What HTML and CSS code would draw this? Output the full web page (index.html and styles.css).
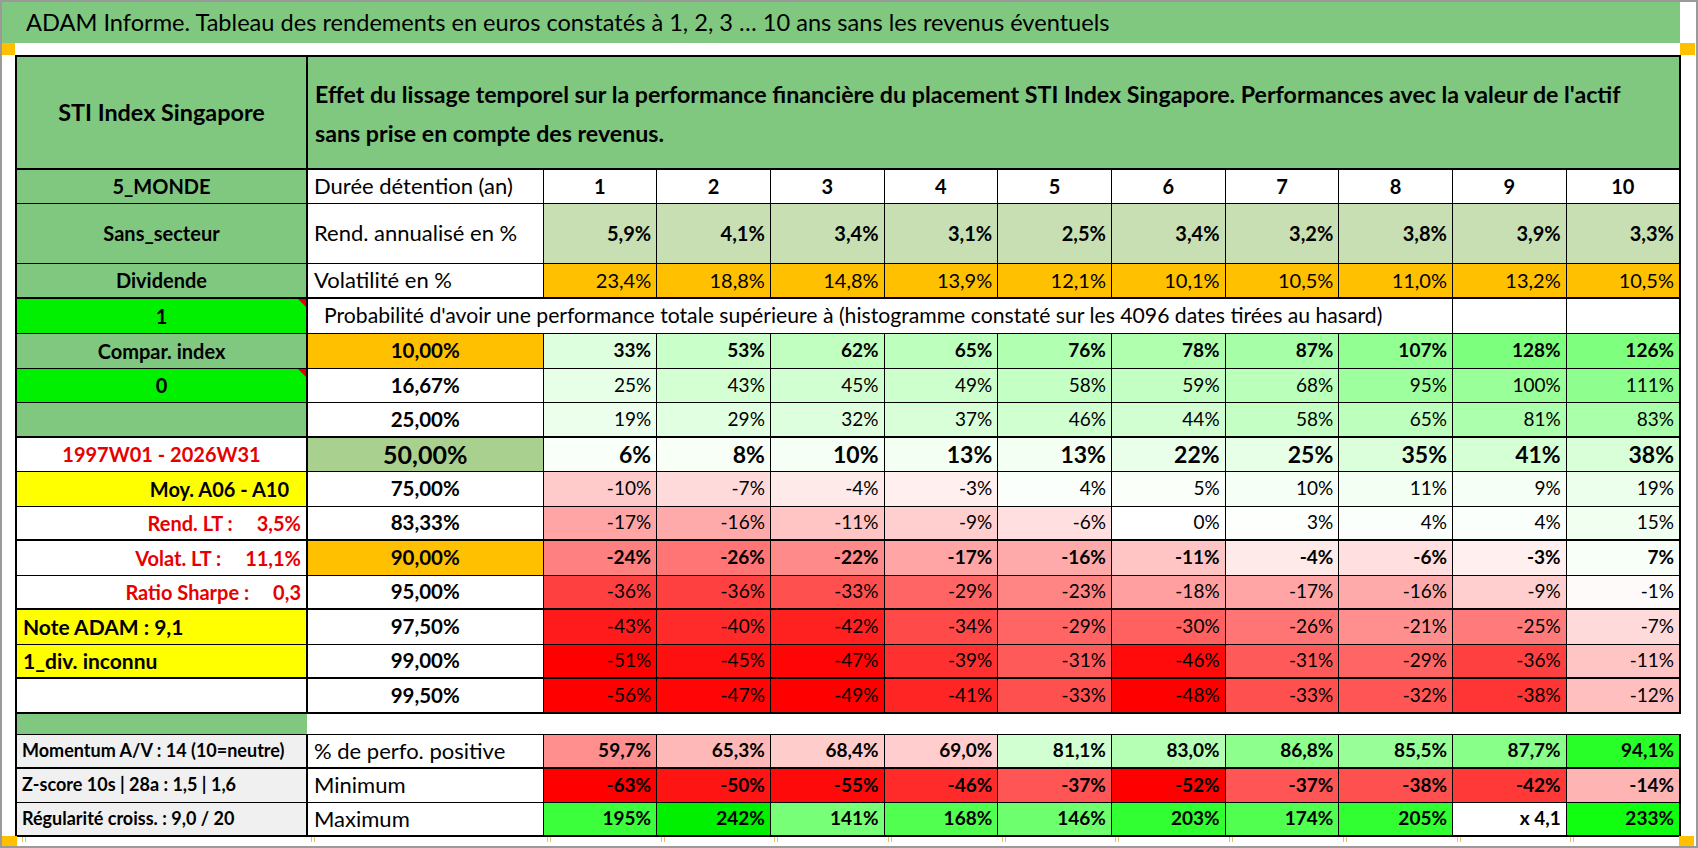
FILE: index.html
```html
<!DOCTYPE html>
<html lang="fr">
<head>
<meta charset="utf-8">
<title>ADAM Informe – STI Index Singapore</title>
<link rel="stylesheet" href="styles.css">
</head>
<body>
<div class="page">
  <div class="title-row">
    <div class="title">ADAM Informe. Tableau des rendements en euros constatés à 1, 2, 3 … 10 ans sans les revenus éventuels</div>
  </div>
  <div class="marks-row"><span class="mark mark-l"></span><span class="mark mark-r"></span></div>
  <div class="main">
    <table class="sheet">
      <colgroup>
        <col class="col-a"><col class="col-b">
        <col class="col-n"><col class="col-n"><col class="col-n"><col class="col-n"><col class="col-n">
        <col class="col-n"><col class="col-n"><col class="col-n"><col class="col-n"><col class="col-n">
      </colgroup>
      <tr class="r-head tb">
        <td class="c1 green hd sti center">STI Index Singapore</td>
        <td class="green hd intro" colspan="11"><span class="line">Effet du lissage temporel sur la performance financière du placement STI Index Singapore. Performances avec la valeur de l'actif</span><br><span class="line">sans prise en compte des revenus.</span></td>
      </tr>
      <tr class="r-duree">
        <td class="c1 green b center">5_MONDE</td>
        <td class="lbl">Durée détention (an)</td>
        <td class="b center">1</td><td class="b center">2</td><td class="b center">3</td><td class="b center">4</td><td class="b center">5</td>
        <td class="b center">6</td><td class="b center">7</td><td class="b center">8</td><td class="b center">9</td><td class="b center">10</td>
      </tr>
      <tr class="r-rend">
        <td class="c1 green b center">Sans_secteur</td>
        <td class="lbl">Rend. annualisé en %</td>
        <td class="sage num b">5,9%</td><td class="sage num b">4,1%</td><td class="sage num b">3,4%</td><td class="sage num b">3,1%</td><td class="sage num b">2,5%</td>
        <td class="sage num b">3,4%</td><td class="sage num b">3,2%</td><td class="sage num b">3,8%</td><td class="sage num b">3,9%</td><td class="sage num b">3,3%</td>
      </tr>
      <tr class="r-vol tb">
        <td class="c1 green b center">Dividende</td>
        <td class="lbl">Volatilité en %</td>
        <td class="orange num">23,4%</td><td class="orange num">18,8%</td><td class="orange num">14,8%</td><td class="orange num">13,9%</td><td class="orange num">12,1%</td>
        <td class="orange num">10,1%</td><td class="orange num">10,5%</td><td class="orange num">11,0%</td><td class="orange num">13,2%</td><td class="orange num">10,5%</td>
      </tr>
      <tr class="r-prob">
        <td class="c1 lime b center flag">1</td>
        <td class="prob" colspan="9">Probabilité d'avoir une performance totale supérieure à (histogramme constaté sur les 4096 dates tirées au hasard)</td>
        <td></td><td></td>
      </tr>
      <tr class="r-odd">
        <td class="c1 green b center">Compar. index</td>
        <td class="orange pct">10,00%</td>
        <td class="num b" style="background:#ddffdd">33%</td><td class="num b" style="background:#c9ffc9">53%</td><td class="num b" style="background:#c0ffc0">62%</td><td class="num b" style="background:#bdffbd">65%</td><td class="num b" style="background:#b1ffb1">76%</td>
        <td class="num b" style="background:#afffaf">78%</td><td class="num b" style="background:#a6ffa6">87%</td><td class="num b" style="background:#92ff92">107%</td><td class="num b" style="background:#7cff7c">128%</td><td class="num b" style="background:#7eff7e">126%</td>
      </tr>
      <tr class="r-even">
        <td class="c1 lime b center flag">0</td>
        <td class="pct">16,67%</td>
        <td class="num" style="background:#e6ffe6">25%</td><td class="num" style="background:#d3ffd3">43%</td><td class="num" style="background:#d1ffd1">45%</td><td class="num" style="background:#cdffcd">49%</td><td class="num" style="background:#c4ffc4">58%</td>
        <td class="num" style="background:#c3ffc3">59%</td><td class="num" style="background:#baffba">68%</td><td class="num" style="background:#9eff9e">95%</td><td class="num" style="background:#99ff99">100%</td><td class="num" style="background:#8eff8e">111%</td>
      </tr>
      <tr class="r-odd tb">
        <td class="c1 green"></td>
        <td class="pct">25,00%</td>
        <td class="num" style="background:#ecffec">19%</td><td class="num" style="background:#e1ffe1">29%</td><td class="num" style="background:#deffde">32%</td><td class="num" style="background:#d9ffd9">37%</td><td class="num" style="background:#d0ffd0">46%</td>
        <td class="num" style="background:#d2ffd2">44%</td><td class="num" style="background:#c4ffc4">58%</td><td class="num" style="background:#bdffbd">65%</td><td class="num" style="background:#acffac">81%</td><td class="num" style="background:#aaffaa">83%</td>
      </tr>
      <tr class="r-even">
        <td class="c1 red-text b center">1997W01 - 2026W31</td>
        <td class="sage2 pct big">50,00%</td>
        <td class="num b big" style="background:#f9fff9">6%</td><td class="num b big" style="background:#f7fff7">8%</td><td class="num b big" style="background:#f5fff5">10%</td><td class="num b big" style="background:#f2fff2">13%</td><td class="num b big" style="background:#f2fff2">13%</td>
        <td class="num b big" style="background:#e9ffe9">22%</td><td class="num b big" style="background:#e6ffe6">25%</td><td class="num b big" style="background:#dbffdb">35%</td><td class="num b big" style="background:#d5ffd5">41%</td><td class="num b big" style="background:#d8ffd8">38%</td>
      </tr>
      <tr class="r-odd">
        <td class="c1 yellow b right moy">Moy. A06 - A10</td>
        <td class="pct">75,00%</td>
        <td class="num" style="background:#ffcaca">-10%</td><td class="num" style="background:#ffdada">-7%</td><td class="num" style="background:#ffeaea">-4%</td><td class="num" style="background:#ffefef">-3%</td><td class="num" style="background:#fbfffb">4%</td>
        <td class="num" style="background:#fafffa">5%</td><td class="num" style="background:#f5fff5">10%</td><td class="num" style="background:#f4fff4">11%</td><td class="num" style="background:#f6fff6">9%</td><td class="num" style="background:#ecffec">19%</td>
      </tr>
      <tr class="r-even tb">
        <td class="c1 red-text b right lt">Rend. LT :<span class="lt-val">3,5%</span></td>
        <td class="pct">83,33%</td>
        <td class="num" style="background:#ffa5a5">-17%</td><td class="num" style="background:#ffaaaa">-16%</td><td class="num" style="background:#ffc5c5">-11%</td><td class="num" style="background:#ffcfcf">-9%</td><td class="num" style="background:#ffdfdf">-6%</td>
        <td class="num" style="background:#ffffff">0%</td><td class="num" style="background:#fcfffc">3%</td><td class="num" style="background:#fbfffb">4%</td><td class="num" style="background:#fbfffb">4%</td><td class="num" style="background:#f0fff0">15%</td>
      </tr>
      <tr class="r-odd">
        <td class="c1 red-text b right lt">Volat. LT :<span class="lt-val">11,1%</span></td>
        <td class="orange pct">90,00%</td>
        <td class="num b" style="background:#ff8080">-24%</td><td class="num b" style="background:#ff7575">-26%</td><td class="num b" style="background:#ff8a8a">-22%</td><td class="num b" style="background:#ffa5a5">-17%</td><td class="num b" style="background:#ffaaaa">-16%</td>
        <td class="num b" style="background:#ffc5c5">-11%</td><td class="num b" style="background:#ffeaea">-4%</td><td class="num b" style="background:#ffdfdf">-6%</td><td class="num b" style="background:#ffefef">-3%</td><td class="num b" style="background:#f8fff8">7%</td>
      </tr>
      <tr class="r-even tb">
        <td class="c1 red-text b right lt">Ratio Sharpe :<span class="lt-val">0,3</span></td>
        <td class="pct">95,00%</td>
        <td class="num" style="background:#ff4040">-36%</td><td class="num" style="background:#ff4040">-36%</td><td class="num" style="background:#ff5050">-33%</td><td class="num" style="background:#ff6565">-29%</td><td class="num" style="background:#ff8585">-23%</td>
        <td class="num" style="background:#ff9f9f">-18%</td><td class="num" style="background:#ffa5a5">-17%</td><td class="num" style="background:#ffaaaa">-16%</td><td class="num" style="background:#ffcfcf">-9%</td><td class="num" style="background:#fffafa">-1%</td>
      </tr>
      <tr class="r-odd">
        <td class="c1 yellow b left-pad">Note ADAM : 9,1</td>
        <td class="pct">97,50%</td>
        <td class="num" style="background:#ff1b1b">-43%</td><td class="num" style="background:#ff2b2b">-40%</td><td class="num" style="background:#ff2020">-42%</td><td class="num" style="background:#ff4a4a">-34%</td><td class="num" style="background:#ff6565">-29%</td>
        <td class="num" style="background:#ff6060">-30%</td><td class="num" style="background:#ff7575">-26%</td><td class="num" style="background:#ff8f8f">-21%</td><td class="num" style="background:#ff7a7a">-25%</td><td class="num" style="background:#ffdada">-7%</td>
      </tr>
      <tr class="r-even tb">
        <td class="c1 yellow b left-pad">1_div. inconnu</td>
        <td class="pct">99,00%</td>
        <td class="num" style="background:#ff0000">-51%</td><td class="num" style="background:#ff1010">-45%</td><td class="num" style="background:#ff0505">-47%</td><td class="num" style="background:#ff3030">-39%</td><td class="num" style="background:#ff5a5a">-31%</td>
        <td class="num" style="background:#ff0b0b">-46%</td><td class="num" style="background:#ff5a5a">-31%</td><td class="num" style="background:#ff6565">-29%</td><td class="num" style="background:#ff4040">-36%</td><td class="num" style="background:#ffc5c5">-11%</td>
      </tr>
      <tr class="r-odd tb">
        <td class="c1"></td>
        <td class="pct">99,50%</td>
        <td class="num" style="background:#ff0000">-56%</td><td class="num" style="background:#ff0505">-47%</td><td class="num" style="background:#ff0000">-49%</td><td class="num" style="background:#ff2525">-41%</td><td class="num" style="background:#ff5050">-33%</td>
        <td class="num" style="background:#ff0000">-48%</td><td class="num" style="background:#ff5050">-33%</td><td class="num" style="background:#ff5555">-32%</td><td class="num" style="background:#ff3535">-38%</td><td class="num" style="background:#ffbfbf">-12%</td>
      </tr>
      <tr class="r-gap">
        <td class="c1 green gap-c1"></td>
        <td class="blank" colspan="11"></td>
      </tr>
      <tr class="r-even tb">
        <td class="c1 grey stat">Momentum A/V : 14 (10=neutre)</td>
        <td class="lbl">% de perfo. positive</td>
        <td class="num b" style="background:#ff8e8e">59,7%</td><td class="num b" style="background:#ffb8b8">65,3%</td><td class="num b" style="background:#ffcccc">68,4%</td><td class="num b" style="background:#ffcdcd">69,0%</td><td class="num b" style="background:#d2ffd2">81,1%</td>
        <td class="num b" style="background:#b4ffb4">83,0%</td><td class="num b" style="background:#8cff8c">86,8%</td><td class="num b" style="background:#98ff98">85,5%</td><td class="num b" style="background:#88ff88">87,7%</td><td class="num b" style="background:#28ff28">94,1%</td>
      </tr>
      <tr class="r-odd2">
        <td class="c1 grey stat">Z-score 10s | 28a : 1,5 | 1,6</td>
        <td class="lbl">Minimum</td>
        <td class="num b" style="background:#ff0000">-63%</td><td class="num b" style="background:#ff1414">-50%</td><td class="num b" style="background:#ff0a0a">-55%</td><td class="num b" style="background:#ff2a2a">-46%</td><td class="num b" style="background:#ff5555">-37%</td>
        <td class="num b" style="background:#ff0000">-52%</td><td class="num b" style="background:#ff5555">-37%</td><td class="num b" style="background:#ff5050">-38%</td><td class="num b" style="background:#ff3838">-42%</td><td class="num b" style="background:#ffb4b4">-14%</td>
      </tr>
      <tr class="r-odd2">
        <td class="c1 grey stat">Régularité croiss. : 9,0 / 20</td>
        <td class="lbl">Maximum</td>
        <td class="num b" style="background:#3cff3c">195%</td><td class="num b" style="background:#00f000">242%</td><td class="num b" style="background:#78ff78">141%</td><td class="num b" style="background:#50ff50">168%</td><td class="num b" style="background:#6eff6e">146%</td>
        <td class="num b" style="background:#32ff32">203%</td><td class="num b" style="background:#50ff50">174%</td><td class="num b" style="background:#32ff32">205%</td><td class="num b" style="background:#ffffff">x 4,1</td><td class="num b" style="background:#10ff10">233%</td>
      </tr>
    </table>
  </div>
  <div class="foot">
    <span class="fmark fmark-l"></span>
    <div class="ticks">
      <span class="tick"></span><span class="tick"></span><span class="tick"></span><span class="tick"></span>
      <span class="tick"></span><span class="tick"></span><span class="tick"></span><span class="tick"></span>
      <span class="tick"></span><span class="tick"></span><span class="tick"></span><span class="tick"></span>
    </div>
    <span class="fmark fmark-r"></span>
  </div>
</div>
</body>
</html>
```
FILE: styles.css
```css
* { box-sizing: border-box; }
html, body { margin: 0; padding: 0; background: #ffffff; }
body {
  font-family: "Lato", "Liberation Sans", sans-serif;
  color: #000000;
}

.page {
  width: 1698px;
  height: 848px;
  border: 2px solid #9a9a9a;
  display: flex;
  flex-direction: column;
  overflow: hidden;
  background: #ffffff;
}

/* title */
.title-row { flex: none; height: 41px; display: flex; }
.title {
  width: 1678px;
  background: #80c880;
  font-size: 23.6px;
  line-height: 41px;
  padding-left: 24px;
  white-space: nowrap;
}

/* selection handles */
.marks-row { flex: none; height: 12px; display: flex; }
.mark { display: block; height: 12px; background: #ffc000; }
.mark-l { width: 13px; }
.mark-r { width: 15px; margin-left: 1665px; }

.main { flex: none; height: 781px; padding-left: 13px; }

/* sheet */
.sheet {
  width: 1664px;
  border-collapse: collapse;
  table-layout: fixed;
  border: 2px solid #000;
}
.col-a { width: 291px; }
.col-b { width: 236px; }
.col-n { width: 113.7px; }

.sheet td {
  border: 1px solid #000;
  padding: 0 5px;
  white-space: nowrap;
  overflow: hidden;
  vertical-align: middle;
  font-size: 19px;
  line-height: 1.1;
}
.sheet td.c1 { border-right: 2px solid #000; }
.sheet tr.tb td { border-bottom: 2px solid #000; }

.r-head { height: 113px; }
.r-duree { height: 34px; }
.r-rend { height: 60px; }
.r-vol { height: 35px; }
.r-prob { height: 35px; }
.r-odd { height: 35px; }
.r-even { height: 34px; }
.r-odd2 { height: 34px; }
.r-gap { height: 21px; }

.sheet td.hd { font-weight: 700; }
.sheet td.intro {
  font-size: 23.2px;
  line-height: 39px;
  padding-left: 7px;
  padding-top: 2px;
}
.intro .line { white-space: nowrap; }

.b { font-weight: 700; }
.center { text-align: center; }
.right { text-align: right; }
.num { text-align: right; }
.sheet td.b.center, .sheet td.c1 { font-size: 20px; }
.sheet td.c1.sti { font-size: 23.4px; }
.sheet td.pct { text-align: center; font-weight: 700; font-size: 20.5px; }
.sheet td.num.big { font-size: 23px; }
.sheet td.pct.big { font-size: 25px; }
.sheet td.lbl { font-size: 22px; padding-left: 6px; }
.sheet td.prob { font-size: 21.2px; padding-left: 16px; }
.sheet td.sage, .sheet td.orange.num { font-size: 20px; }

/* fills */
.green { background: #80c880; }
.lime { background: #00f000; }
.yellow { background: #ffff00; }
.orange { background: #ffc000; }
.sage { background: #c8dfb4; }
.sage2 { background: #a9d08e; }
.grey { background: #f0f0f0; }

.red-text { color: #e60000; }
.sheet td.moy { padding-right: 17px; }
.sheet td.lt { padding-right: 5px; }
.lt-val { margin-left: 24px; }
.sheet td.left-pad { padding-left: 6px; font-size: 21px; }
.sheet td.stat { font-size: 18px; font-weight: 700; padding-left: 5px; }

.flag { position: relative; }
.flag::after {
  content: "";
  position: absolute;
  top: 0;
  right: 0;
  border-top: 8px solid #e00000;
  border-left: 8px solid transparent;
}

/* empty spacer row */
.sheet td.blank {
  border-left-style: hidden;
  border-right-style: hidden;
  background: #ffffff;
}
.sheet td.gap-c1 { border-right: none; }

/* bottom strip */
.foot { flex: none; height: 10px; display: flex; }
.fmark { display: block; width: 15px; height: 10px; background: #ffc000; }
.ticks {
  width: 1662px;
  display: grid;
  grid-template-columns: 289px 236px repeat(10, 113.7px);
}
.tick {
  display: block;
  width: 4px;
  height: 5px;
  margin: 1px 0 0 5px;
  border-left: 1px solid #e2c45a;
  border-right: 1px solid #e2c45a;
}
```
